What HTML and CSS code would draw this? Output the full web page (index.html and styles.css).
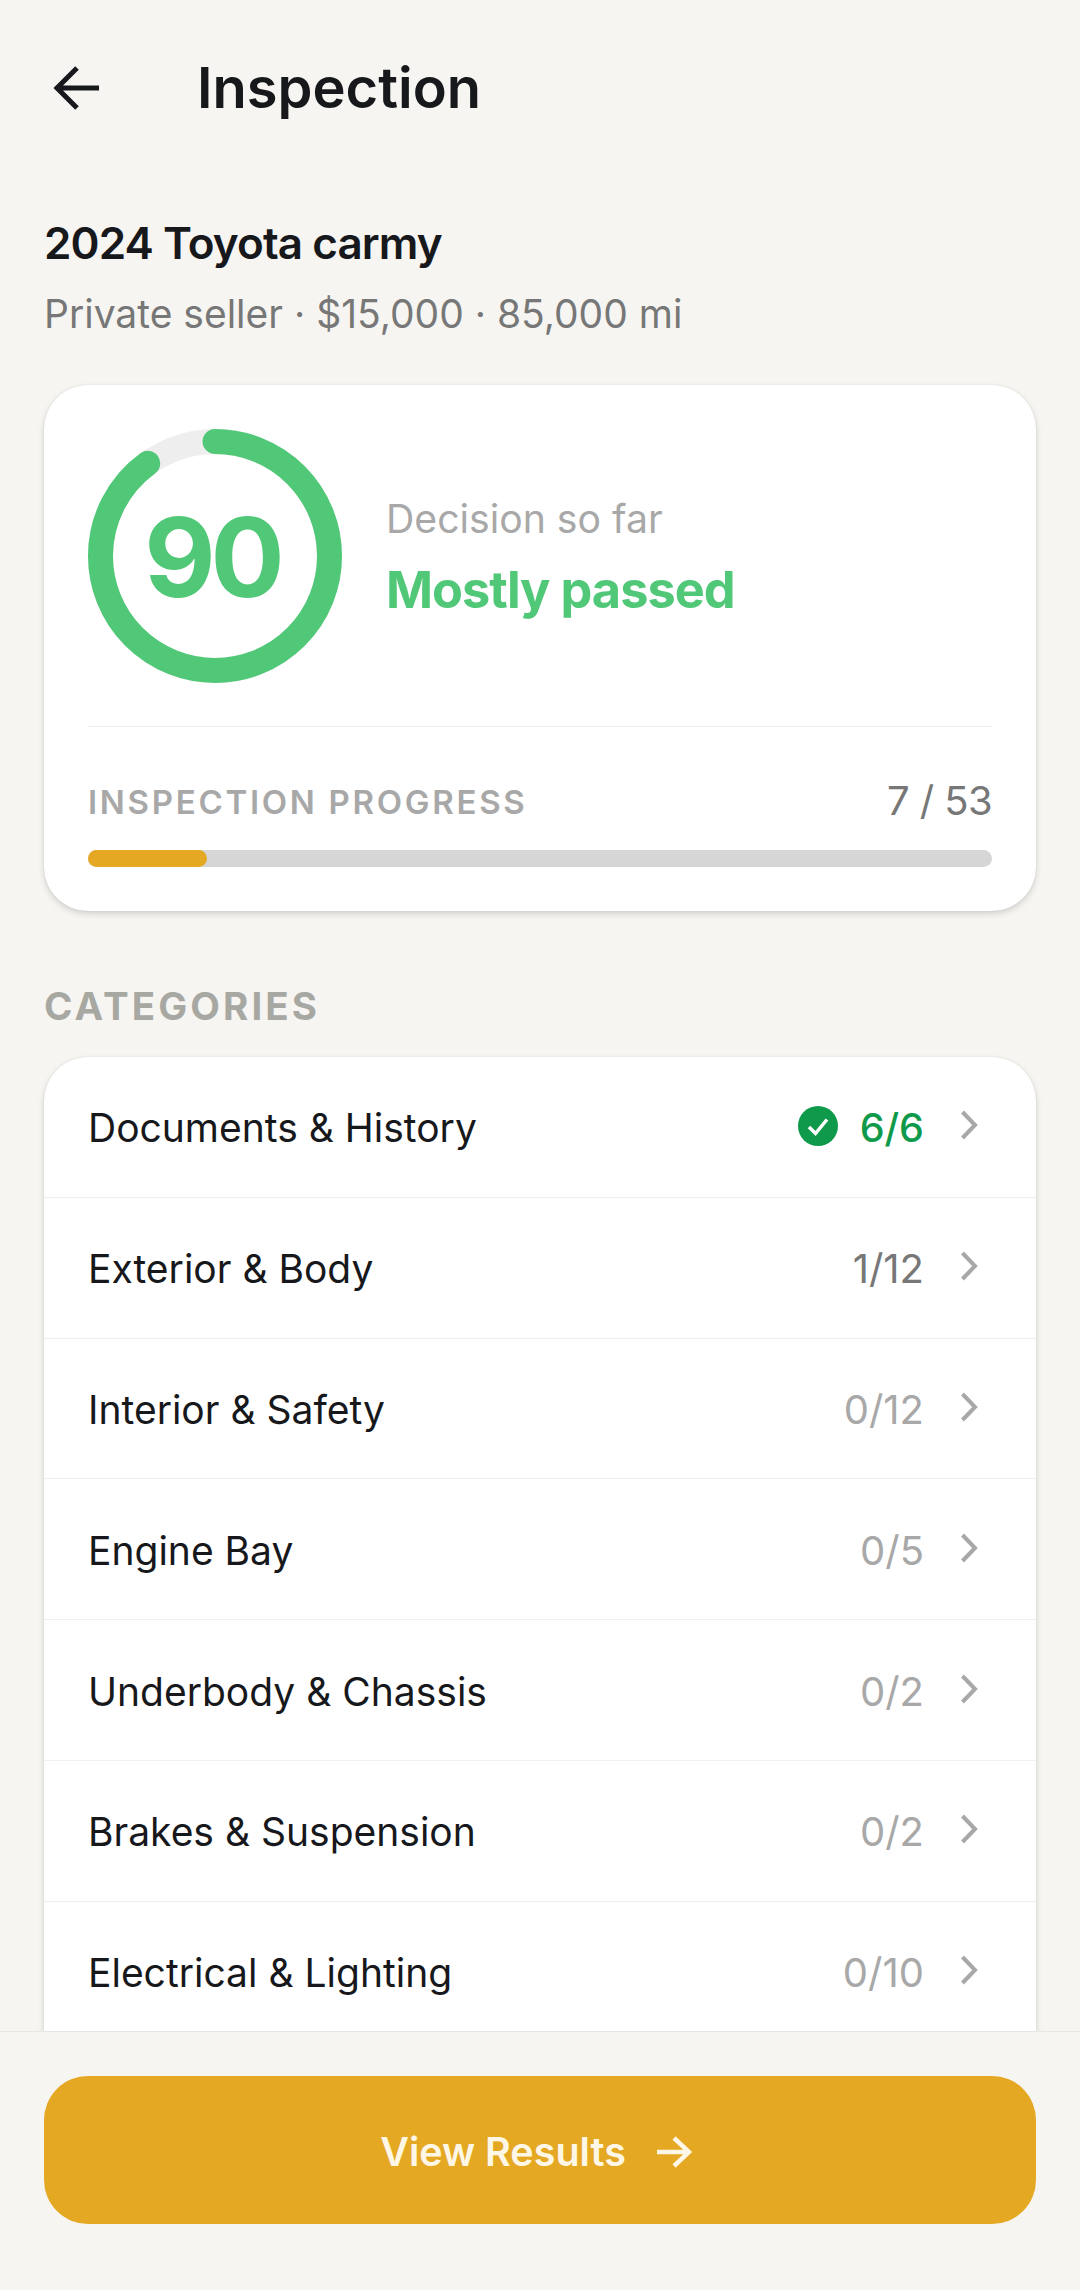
FILE: index.html
```html
<!DOCTYPE html>
<html lang="en">
<head>
<meta charset="utf-8">
<title>Inspection</title>
<link rel="stylesheet" href="styles.css">
</head>
<body>
<div class="screen">
  <header class="topbar">
    <svg class="back" viewBox="0 0 48 48" width="48" height="48" fill="none" stroke="#17181c" stroke-width="5"><path d="M47 24H5M25 4 5 24l20 20"/></svg>
    <h1 class="title">Inspection</h1>
  </header>
  <main class="content">
    <h2 class="vehicle">2024 Toyota carmy</h2>
    <p class="meta">Private seller · $15,000 · 85,000 mi</p>
    <section class="card summary">
      <div class="decision">
        <div class="ring">
          <svg viewBox="0 0 254 254" width="254" height="254" fill="none" stroke-width="25">
            <circle cx="127" cy="127" r="114.500" stroke="#eeeeee"/>
            <circle cx="127" cy="127" r="114.500" stroke="#50c878" stroke-linecap="round" pathLength="100" stroke-dasharray="90 100" transform="rotate(-90 127 127)"/>
          </svg>
          <span class="score">90</span>
        </div>
        <div class="decision-text">
          <span class="decision-label">Decision so far</span>
          <span class="decision-value">Mostly passed</span>
        </div>
      </div>
      <div class="progress">
        <div class="progress-head">
          <span class="progress-label">INSPECTION PROGRESS</span>
          <span class="progress-count">7 / 53</span>
        </div>
        <div class="track"><div class="fill"></div></div>
      </div>
    </section>
    <h3 class="section-label">CATEGORIES</h3>
    <section class="card list">
      <div class="row">
        <span class="row-name">Documents &amp; History</span>
        <svg class="check" viewBox="0 0 40 40" width="40" height="40"><circle cx="20" cy="20" r="20" fill="#0e9a4a"/><path d="M11 21l6.500 6.500L29 13.500" fill="none" stroke="#fff" stroke-width="3.500"/></svg>
        <span class="row-count done">6/6</span>
        <svg class="chev" viewBox="0 0 18 30" width="18" height="30" fill="none" stroke="#a8a8a8" stroke-width="4"><path d="M2.500 2 15 15 2.500 28"/></svg>
      </div>
      <div class="row">
        <span class="row-name">Exterior &amp; Body</span>
        <span class="row-count started">1/12</span>
        <svg class="chev" viewBox="0 0 18 30" width="18" height="30" fill="none" stroke="#a8a8a8" stroke-width="4"><path d="M2.500 2 15 15 2.500 28"/></svg>
      </div>
      <div class="row">
        <span class="row-name">Interior &amp; Safety</span>
        <span class="row-count">0/12</span>
        <svg class="chev" viewBox="0 0 18 30" width="18" height="30" fill="none" stroke="#a8a8a8" stroke-width="4"><path d="M2.500 2 15 15 2.500 28"/></svg>
      </div>
      <div class="row">
        <span class="row-name">Engine Bay</span>
        <span class="row-count">0/5</span>
        <svg class="chev" viewBox="0 0 18 30" width="18" height="30" fill="none" stroke="#a8a8a8" stroke-width="4"><path d="M2.500 2 15 15 2.500 28"/></svg>
      </div>
      <div class="row">
        <span class="row-name">Underbody &amp; Chassis</span>
        <span class="row-count">0/2</span>
        <svg class="chev" viewBox="0 0 18 30" width="18" height="30" fill="none" stroke="#a8a8a8" stroke-width="4"><path d="M2.500 2 15 15 2.500 28"/></svg>
      </div>
      <div class="row">
        <span class="row-name">Brakes &amp; Suspension</span>
        <span class="row-count">0/2</span>
        <svg class="chev" viewBox="0 0 18 30" width="18" height="30" fill="none" stroke="#a8a8a8" stroke-width="4"><path d="M2.500 2 15 15 2.500 28"/></svg>
      </div>
      <div class="row">
        <span class="row-name">Electrical &amp; Lighting</span>
        <span class="row-count">0/10</span>
        <svg class="chev" viewBox="0 0 18 30" width="18" height="30" fill="none" stroke="#a8a8a8" stroke-width="4"><path d="M2.500 2 15 15 2.500 28"/></svg>
      </div>
    </section>
  </main>
  <footer class="footer">
    <button class="cta">View Results
      <svg viewBox="0 0 36 32" width="36" height="32" fill="none" stroke="#fff7e6" stroke-width="4.500"><path d="M1 16h32M18 2l15 14-15 14"/></svg>
    </button>
  </footer>
</div>
</body>
</html>
```
FILE: styles.css
```css
* { box-sizing: border-box; margin: 0; padding: 0; }
html, body { width: 1080px; height: 2290px; overflow: hidden; background: #f6f5f2; }
body { font-family: Inter, "Liberation Sans", sans-serif; color: #17181c; }
.screen { width: 1080px; height: 2290px; display: flex; flex-direction: column; }
.topbar { height: 176px; flex: none; display: flex; align-items: center; padding-left: 52px; gap: 97px; }
.back { flex: none; }
.title { font-size: 56px; font-weight: 600; line-height: 66px; }
.content { flex: 1; min-height: 0; overflow: hidden; padding: 0 44px; }
.vehicle { font-size: 44px; font-weight: 600; line-height: 60px; margin-top: 37px; letter-spacing: -0.9px; }
.meta { font-size: 39px; line-height: 52px; margin-top: 15px; color: #777777; }
.card { background: #fff; border-radius: 44px; box-shadow: 0 3px 6px rgba(0,0,0,.14), 0 0 2px rgba(0,0,0,.1); }
.summary { margin-top: 45px; height: 526px; padding: 44px; display: flex; flex-direction: column; }
.decision { display: flex; align-items: center; gap: 44px; height: 298px; padding-bottom: 44px; border-bottom: 1px solid #f0f0f0; flex: none; }
.ring { position: relative; width: 254px; height: 254px; flex: none; }
.ring svg { display: block; }
.score { position: absolute; inset: 0; display: flex; align-items: center; justify-content: center; padding: 2px 6px 0 0; font-size: 110px; font-weight: 700; color: #50c878; letter-spacing: -5px; }
.decision-text { display: flex; flex-direction: column; gap: 12px; margin-top: 5px; }
.decision-label { font-size: 39.200px; line-height: 52px; color: #a8a8a8; }
.decision-value { font-size: 50.500px; line-height: 66px; font-weight: 700; color: #50c878; letter-spacing: -1px; }
.progress { margin-top: 50px; }
.progress-head { display: flex; justify-content: space-between; align-items: center; height: 50px; }
.progress-label { font-size: 33px; font-weight: 600; letter-spacing: 2.700px; color: #a8a8a8; }
.progress-count { font-size: 40px; font-weight: 400; color: #777777; margin-top: -4px; letter-spacing: -0.6px; }
.track { height: 17px; margin-top: 23px; background: #d6d6d6; border-radius: 9px; }
.fill { width: 13.200%; height: 100%; background: #e5a823; border-radius: 9px; }
.section-label { font-size: 38.500px; font-weight: 700; letter-spacing: 3.100px; color: #a8a8a3; line-height: 48px; margin-top: 71px; }
.list { margin-top: 27px; overflow: hidden; border-radius: 44px 44px 0 0; }
.row { height: 140.800px; display: flex; align-items: center; padding: 0 58px 0 44px; border-bottom: 1px solid #f0f0f0; }
.row-name { flex: 1; font-size: 39px; color: #17181c; margin-top: 2px; }
.row-count { font-size: 40px; color: #a8a8a8; margin-right: 36px; margin-top: 2px; }
.row-count.done { color: #0e9a4a; font-weight: 500; font-size: 39.500px; }
.row-count.started { color: #777777; }
.check { margin-right: 22px; flex: none; margin-top: -2px; }
.chev { flex: none; margin-top: -3px; }
.footer { flex: none; height: 259px; padding: 44px 44px 66px; border-top: 1px solid #e6e6e4; background: #f6f5f2; position: relative; }
.cta { width: 100%; height: 148px; border: 0; border-radius: 44px; background: #e5a823; color: #fff7e6; font-family: inherit; font-size: 39.500px; font-weight: 600; display: flex; align-items: center; justify-content: center; gap: 30px; padding: 4px 8px 0 0; }
```
